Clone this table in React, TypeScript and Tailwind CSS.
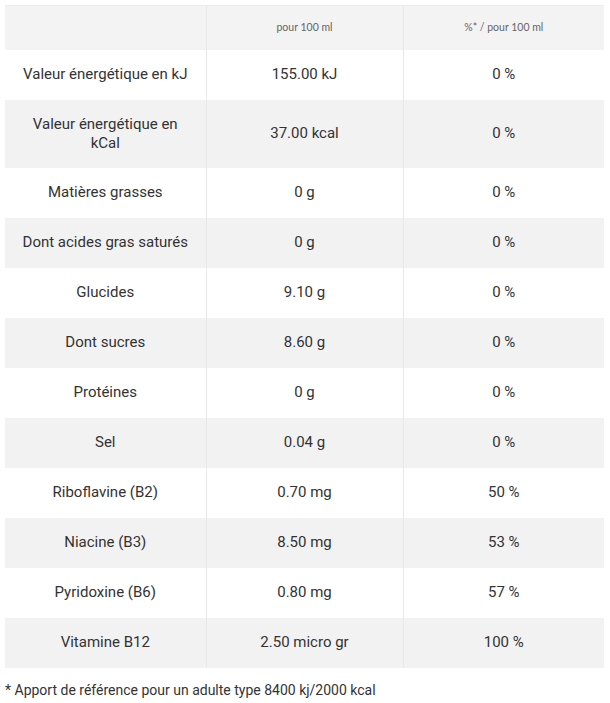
import React from 'react';

type Row = { label: string; value: string; percent: string };

const rows: Row[] = [
  { label: 'Valeur énergétique en kJ', value: '155.00 kJ', percent: '0 %' },
  { label: 'Valeur énergétique en kCal', value: '37.00 kcal', percent: '0 %' },
  { label: 'Matières grasses', value: '0 g', percent: '0 %' },
  { label: 'Dont acides gras saturés', value: '0 g', percent: '0 %' },
  { label: 'Glucides', value: '9.10 g', percent: '0 %' },
  { label: 'Dont sucres', value: '8.60 g', percent: '0 %' },
  { label: 'Protéines', value: '0 g', percent: '0 %' },
  { label: 'Sel', value: '0.04 g', percent: '0 %' },
  { label: 'Riboflavine (B2)', value: '0.70 mg', percent: '50 %' },
  { label: 'Niacine (B3)', value: '8.50 mg', percent: '53 %' },
  { label: 'Pyridoxine (B6)', value: '0.80 mg', percent: '57 %' },
  { label: 'Vitamine B12', value: '2.50 micro gr', percent: '100 %' },
];

const App: React.FC = () => {
  return (
    <div className="bg-white w-[610px] h-[703px] pt-[5px] px-[5px] text-[#333] font-['Roboto',sans-serif]">
      <table className="w-[599px] border-collapse table-fixed text-[15px] leading-[19px]">
        <colgroup>
          <col className="w-[201px]" />
          <col className="w-[197px]" />
          <col className="w-[201px]" />
        </colgroup>
        <thead>
          <tr className="bg-[#f3f3f3] h-[44px] border-t border-[#ececec]">
            <th className="border-r border-[#e8e8e8]"></th>
            <th className="border-r border-[#e8e8e8] font-normal text-[10.5px] text-[#666] font-['Lato',sans-serif]">pour 100 ml</th>
            <th className="font-normal text-[10.5px] text-[#666] font-['Lato',sans-serif]">%* / pour 100 ml</th>
          </tr>
        </thead>
        <tbody>
          {rows.map((r, i) => (
            <tr key={r.label} className={i % 2 === 0 ? 'bg-white' : 'bg-[#f2f2f2]'}>
              <td className="border-r border-[#e8e8e8] text-center px-[15px] py-[15px] h-[50px]">{r.label}</td>
              <td className="border-r border-[#e8e8e8] text-center px-4 py-[15px]">{r.value}</td>
              <td className="text-center px-4 py-[15px]">{r.percent}</td>
            </tr>
          ))}
        </tbody>
      </table>
      <p className="mt-[13px] text-[14px] leading-[19px]">* Apport de référence pour un adulte type 8400 kj/2000 kcal</p>
    </div>
  );
};

export default App;
